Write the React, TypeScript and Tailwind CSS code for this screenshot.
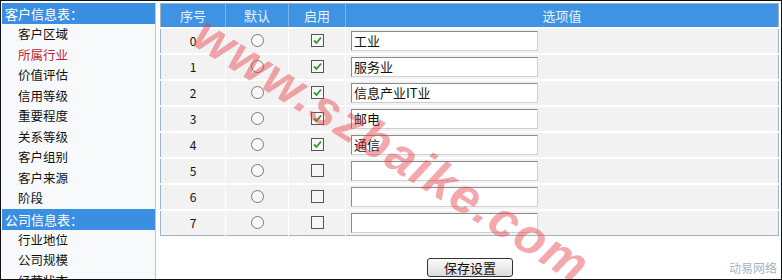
import React from "react";

const sideA = ["客户区域", "所属行业", "价值评估", "信用等级", "重要程度", "关系等级", "客户组别", "客户来源", "阶段"];
const sideB = ["行业地位", "公司规模", "经营状态"];
const rows = [
  { n: 0, v: "工业", c: true },
  { n: 1, v: "服务业", c: true },
  { n: 2, v: "信息产业IT业", c: true },
  { n: 3, v: "邮电", c: true },
  { n: 4, v: "通信", c: true },
  { n: 5, v: "", c: false },
  { n: 6, v: "", c: false },
  { n: 7, v: "", c: false },
];

function Check({ on }: { on: boolean }) {
  return (
    <div className="w-[13px] h-[13px] border border-[#555] bg-[#f6f6f6] flex items-center justify-center mx-auto">
      {on && (
        <svg width="9" height="9" viewBox="0 0 9 9">
          <path d="M1 4.5 L3.5 7 L8 1.5" stroke="#2a9a2a" strokeWidth="1.8" fill="none" />
        </svg>
      )}
    </div>
  );
}

function Radio() {
  return <div className="w-[13px] h-[13px] rounded-full border border-[#777] bg-[#f8f8f8] mx-auto" />;
}

export default function App() {
  return (
    <div
      className="relative w-[782px] h-[280px] overflow-hidden bg-white border border-[#111] flex"
      style={{ fontFamily: '"Noto Sans CJK SC", "Liberation Sans", sans-serif' }}
    >
      <div className="w-[154px] mt-[2px] ml-[1px] bg-[#f7f9fb] border-r border-[#b6cbe0] flex flex-col shrink-0">
        <div className="h-[21px] bg-[#3b8fe3] text-white text-[13px] leading-[21px] pl-[3px]">客户信息表：</div>
        {sideA.map((s, i) => (
          <div key={s} className={`h-[20.5px] leading-[20.5px] text-[12.5px] pl-[16px] ${i === 1 ? "text-[#c0272d]" : "text-[#111]"}`}>
            {s}
          </div>
        ))}
        <div className="h-[21px] bg-[#3b8fe3] text-white text-[13px] leading-[21px] pl-[3px]">公司信息表：</div>
        {sideB.map((s) => (
          <div key={s} className="h-[20.5px] leading-[20.5px] text-[12.5px] pl-[16px] text-[#111]">{s}</div>
        ))}
      </div>
      <div className="flex-1 flex flex-col pl-[4px] pr-[2px] pt-[2px]">
        <table className="w-full border-collapse border border-[#9fb3c6] text-[12px]">
          <thead>
            <tr className="h-[24px] bg-[#3e93e2] text-[#e8f2fc] text-[13px] font-normal">
              <th className="w-[65px] font-normal border-r border-[#7fb6ea]">序号</th>
              <th className="w-[63px] font-normal border-r border-[#7fb6ea]">默认</th>
              <th className="w-[57px] font-normal border-r border-[#7fb6ea]">启用</th>
              <th className="font-normal">选项值</th>
            </tr>
          </thead>
          <tbody>
            {rows.map((r) => (
              <tr key={r.n} className="h-[26px] bg-[#f2f2f2] border-t-2 border-white">
                <td className="text-center text-[12px] text-[#111] border-r border-white">{r.n}</td>
                <td className="border-r border-white"><Radio /></td>
                <td className="border-r border-white"><Check on={r.c} /></td>
                <td className="pl-[5px]">
                  <div className="w-[187px] h-[20px] bg-white border border-[#8a8a8a] border-r-[#d0d0d0] border-b-[#d0d0d0] text-[13px] leading-[18px] pl-[2px] text-[#111]">
                    {r.v}
                  </div>
                </td>
              </tr>
            ))}
          </tbody>
        </table>
        <div className="flex-1 relative flex items-end justify-center pb-[1px]">
          <button className="w-[86px] h-[19px] ml-[1px] mb-[1px] rounded-[3px] border border-[#333] bg-gradient-to-b from-[#fafafa] to-[#dcdcdc] text-[13px] leading-[17px] text-[#111]">
            保存设置
          </button>
          <div className="absolute right-[2px] bottom-[2px] text-[12px] text-[#a8b4c0]">动易网络</div>
        </div>
      </div>
      <div
        className="absolute left-[198px] top-[0px] text-[50px] leading-[56px] font-bold italic text-[#e8404a] opacity-45 whitespace-nowrap origin-left tracking-[2px] pointer-events-none"
        style={{ transform: "rotate(32deg)", fontFamily: '"Liberation Sans", sans-serif' }}
      >
        www.szbaike.com
      </div>
    </div>
  );
}
